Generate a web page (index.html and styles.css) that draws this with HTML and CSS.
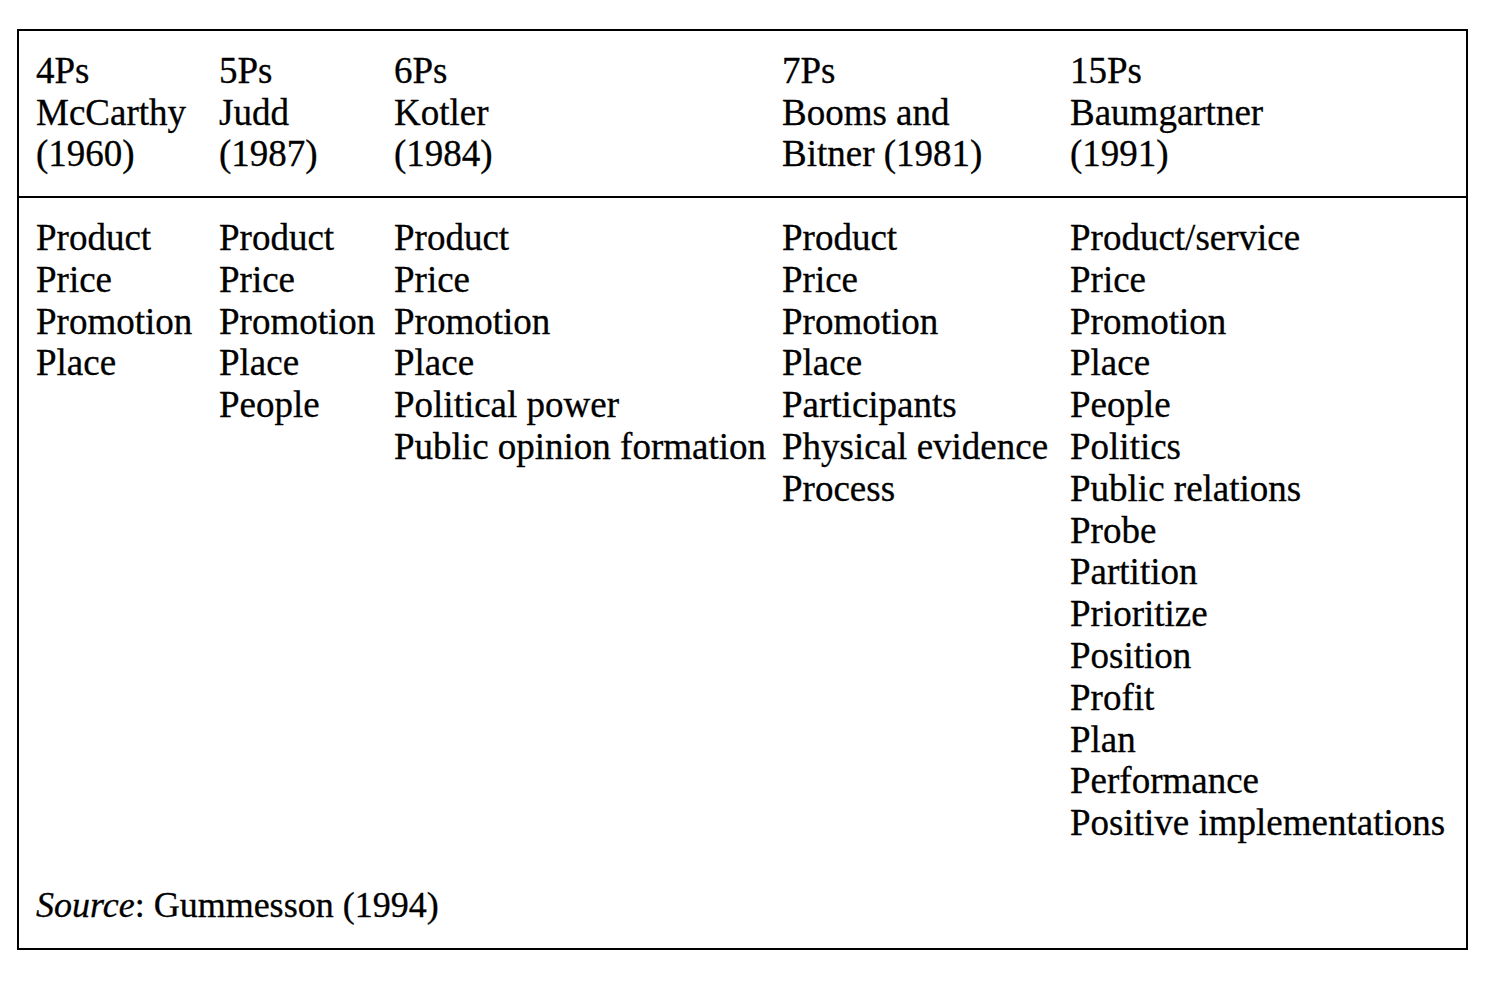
FILE: index.html
```html
<!DOCTYPE html>
<html lang="en">
<head>
<meta charset="utf-8">
<title>Marketing mix Ps</title>
<link rel="stylesheet" href="styles.css">
</head>
<body>
<div class="table">
  <div class="row head">
    <div class="col">4Ps<br>McCarthy<br>(1960)</div>
    <div class="col">5Ps<br>Judd<br>(1987)</div>
    <div class="col">6Ps<br>Kotler<br>(1984)</div>
    <div class="col">7Ps<br>Booms and<br>Bitner (1981)</div>
    <div class="col">15Ps<br>Baumgartner<br>(1991)</div>
  </div>
  <div class="body">
    <div class="row">
      <div class="col">Product<br>Price<br>Promotion<br>Place</div>
      <div class="col">Product<br>Price<br>Promotion<br>Place<br>People</div>
      <div class="col">Product<br>Price<br>Promotion<br>Place<br>Political power<br>Public opinion formation</div>
      <div class="col">Product<br>Price<br>Promotion<br>Place<br>Participants<br>Physical evidence<br>Process</div>
      <div class="col">Product/service<br>Price<br>Promotion<br>Place<br>People<br>Politics<br>Public relations<br>Probe<br>Partition<br>Prioritize<br>Position<br>Profit<br>Plan<br>Performance<br>Positive implementations</div>
    </div>
    <p class="source"><em>Source</em>: Gummesson (1994)</p>
  </div>
</div>
</body>
</html>
```

FILE: styles.css
```css
html, body {
  margin: 0;
  padding: 0;
  background: #ffffff;
}

body {
  font-family: "Liberation Serif", "Times New Roman", serif;
  font-size: 37px;
  color: #000000;
  -webkit-text-stroke: 0.3px #000000;
}

.table {
  box-sizing: border-box;
  width: 1451px;
  margin: 29px 0 0 17px;
  border: 2px solid #000000;
}

.row {
  display: grid;
  grid-template-columns: 183px 175px 388px 288px 1fr;
  white-space: nowrap;
}

.head {
  line-height: 41.5px;
  padding: 19px 0 21px 17px;
  border-bottom: 2px solid #000000;
}

.body {
  line-height: 41.8px;
  padding: 19.6px 0 21.6px 17px;
}

.source {
  margin: 41px 0 0 0;
  font-size: 36px;
}

.source em {
  font-style: italic;
}
```
